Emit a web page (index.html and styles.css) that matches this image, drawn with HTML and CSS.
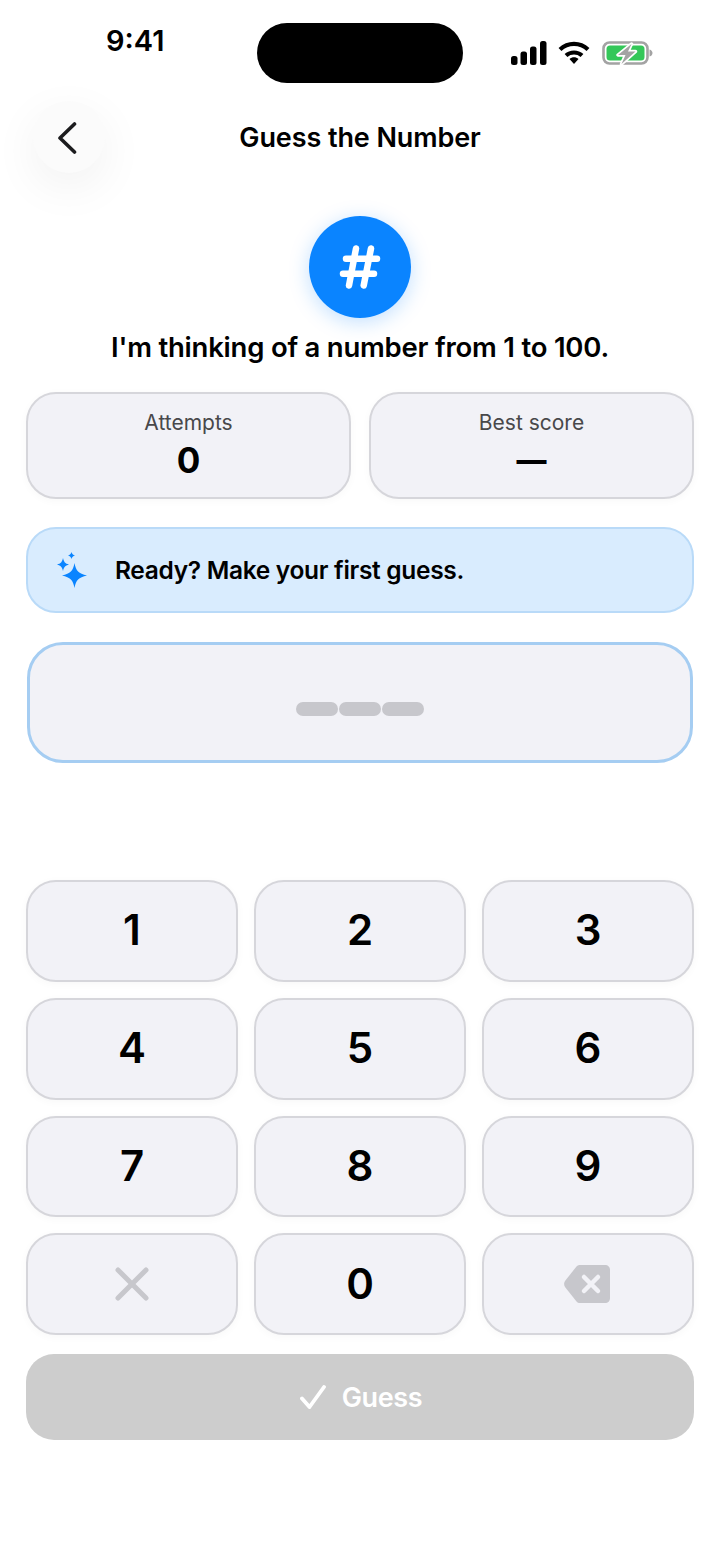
FILE: index.html
```html
<!DOCTYPE html>
<html lang="en">
<head>
<meta charset="utf-8">
<title>Guess the Number</title>
<link rel="stylesheet" href="styles.css">
</head>
<body>
<div class="screen">
  <div class="status">
    <span class="time">9:41</span>
    <div class="island"></div>
    <div class="indicators">
      <svg class="sig" width="37" height="24" viewBox="0 0 37 24"><rect x="1" y="15" width="6.500" height="9" rx="2.500"/><rect x="10.500" y="10.500" width="6.500" height="13.500" rx="2.500"/><rect x="20" y="5.500" width="6.500" height="18.500" rx="2.500"/><rect x="30" y="0" width="6.500" height="24" rx="2.500"/></svg>
      <svg class="wifi" width="32" height="24" viewBox="0 0 32 24"><path d="M2 8.500C10 1 22 1 30 8.500" fill="none" stroke="#000" stroke-width="4.200" stroke-linecap="butt"/><path d="M8 14.500C12.500 10.500 19.500 10.500 24 14.500" fill="none" stroke="#000" stroke-width="4.200"/><path d="M11.500 18 C14 15.800 18 15.800 20.500 18 L16 23Z" fill="#000"/></svg>
      <svg class="batt" width="51" height="24" viewBox="0 0 51 24"><rect x="1.500" y="1.500" width="44" height="21" rx="6" fill="none" stroke="#a3a3a3" stroke-width="2.600"/><rect x="4.500" y="4.500" width="38" height="15" rx="3.500" fill="#34c759"/><path d="M47.500 8.500c2 .5 3 2 3 3.500s-1 3-3 3.500z" fill="#a3a3a3"/><path d="M29.500 3 L16 14 H23.500 L19.500 23 L33.500 10.500 H26 Z" fill="#a3a3a3" stroke="#fff" stroke-width="3.400" stroke-linejoin="round" paint-order="stroke"/></svg>
    </div>
  </div>

  <header class="nav">
    <button class="back" aria-label="Back">
      <svg width="24" height="34" viewBox="0 0 24 34"><path d="M17.500 4 L3 18 L17.500 32" fill="none" stroke="#1c1c1e" stroke-width="3.600" stroke-linecap="round" stroke-linejoin="round"/></svg>
    </button>
    <h1 class="title">Guess the Number</h1>
  </header>

  <div class="hash">
    <svg width="44" height="46" viewBox="0 0 44 46"><g fill="none" stroke="#fff" stroke-width="6.500" stroke-linecap="round"><path d="M18 4.500L11 41.500"/><path d="M33 4.500L25.700 41.500"/><path d="M8 14.700H39"/><path d="M5 29.700H36"/></g></svg>
  </div>
  <p class="lead">I'm thinking of a number from 1 to 100.</p>

  <div class="stats">
    <div class="stat"><span class="stat-label">Attempts</span><span class="stat-value">0</span></div>
    <div class="stat"><span class="stat-label">Best score</span><span class="stat-value stat-empty">—</span></div>
  </div>

  <div class="banner">
    <svg class="spark" width="34" height="38" viewBox="0 0 34 38"><path fill="#0a84ff" d="M19.500 12C21 20 23.500 22.500 32 24.500C23.500 26.500 21 29 19.500 37C18 29 15.500 26.500 7 24.500C15.500 22.500 18 20 19.500 12Z"/><path fill="#0a84ff" d="M8 7C9 11 10 12.500 14 13.500C10 14.500 9 16 8 20C7 16 6 14.500 2 13.500C6 12.500 7 11 8 7Z"/><path fill="#0a84ff" d="M16.500 1C17 3 18 4 20 4.500C18 5 17 6 16.500 8C16 6 15 5 13 4.500C15 4 16 3 16.500 1Z"/></svg>
    <span class="banner-text">Ready? Make your first guess.</span>
  </div>

  <div class="entry">
    <span class="dash"></span><span class="dash"></span><span class="dash"></span>
  </div>

  <div class="pad">
    <button class="key">1</button>
    <button class="key">2</button>
    <button class="key">3</button>
    <button class="key">4</button>
    <button class="key">5</button>
    <button class="key">6</button>
    <button class="key">7</button>
    <button class="key">8</button>
    <button class="key">9</button>
    <button class="key key-icon" aria-label="Clear">
      <svg width="36" height="36" viewBox="0 0 36 36"><path d="M4 4L32 32M32 4L4 32" fill="none" stroke="#c7c7cc" stroke-width="5" stroke-linecap="round"/></svg>
    </button>
    <button class="key">0</button>
    <button class="key key-icon key-back" aria-label="Delete">
      <svg width="48" height="40" viewBox="0 0 48 40"><path d="M17 1H42C45 1 47 3 47 6V34C47 37 45 39 42 39H17C15.500 39 14.500 38.500 13.500 37.500L2 23C0.800 21 0.800 19 2 17L13.500 2.500C14.500 1.500 15.500 1 17 1Z" fill="#c7c7cc"/><path d="M21 13L35 27M35 13L21 27" fill="none" stroke="#f2f2f7" stroke-width="4.500" stroke-linecap="round"/></svg>
    </button>
  </div>

  <button class="guess">
    <svg width="26" height="24" viewBox="0 0 26 24"><path d="M2 13.500L9.500 22L24 2" fill="none" stroke="#fff" stroke-width="3.800" stroke-linecap="round" stroke-linejoin="round"/></svg>
    <span>Guess</span>
  </button>
</div>
</body>
</html>
```
FILE: styles.css
```css
* { box-sizing: border-box; }
html, body { margin: 0; padding: 0; background: #fff; }
body { font-family: Inter, "Liberation Sans", sans-serif; color: #000; }
button { font-family: inherit; padding: 0; }

.screen { width: 720px; height: 1564px; padding: 0 26px; display: flex; flex-direction: column; overflow: hidden; }

.status { height: 101px; padding-top: 23px; margin: 0 -26px; display: flex; align-items: flex-start; position: relative; }
.time { width: 257px; padding-left: 106px; margin-top: 1px; font-size: 29px; line-height: 34px; font-weight: 600; }
.island { width: 206px; height: 60px; border-radius: 30px; background: #000; }
.indicators { display: flex; align-items: center; margin: 18px 0 0 47px; gap: 11px; }
.batt { margin-left: 1px; }

.nav { height: 72px; display: flex; align-items: center; justify-content: center; position: relative; }
.back { position: absolute; left: 7px; top: 0; width: 72px; height: 72px; border-radius: 50%; border: 0; background: #fbfbfb; box-shadow: 0 14px 48px rgba(0,0,0,.06); display: flex; align-items: center; justify-content: center; }
.title { margin: 2px 0 0; font-size: 27px; line-height: 32px; font-weight: 600; letter-spacing: -.1px; }

.hash { width: 102px; height: 102px; margin: 43px auto 0; border-radius: 50%; background: #0a84ff; box-shadow: 0 4px 20px rgba(10,132,255,.25); display: flex; align-items: center; justify-content: center; }
.lead { margin: 11px 0 0; text-align: center; font-size: 27.500px; line-height: 36px; font-weight: 600; letter-spacing: -.22px; }

.stats { margin-top: 27px; display: grid; grid-template-columns: 1fr 1fr; gap: 18px; }
.stat { height: 107px; border: 2px solid #d6d6db; border-radius: 30px; background: #f2f2f7; display: flex; flex-direction: column; align-items: center; padding-top: 16px; box-shadow: 0 2px 8px rgba(0,0,0,.03); }
.stat-label { font-size: 21px; line-height: 26px; font-weight: 400; color: #48484a; }
.stat-value { font-size: 35px; line-height: 42px; font-weight: 700; margin-top: 3px; }
.stat-empty { font-size: 30px; font-weight: 800; }

.banner { height: 86px; margin-top: 28px; border: 2px solid #b9daf8; border-radius: 30px; background: #d9ecfe; display: flex; align-items: center; padding-left: 27px; gap: 26px; }
.spark { flex: none; }
.banner-text { font-size: 24.500px; line-height: 30px; font-weight: 600; letter-spacing: -.31px; }

.entry { height: 121px; margin: 29px 1px 0; border: 3.500px solid #a5cdf2; border-radius: 36px; background: #f2f2f7; display: flex; align-items: center; justify-content: center; gap: 1px; padding-top: 12px; }
.dash { width: 42px; height: 14px; border-radius: 7px; background: #c7c7cc; }

.pad { margin-top: 117px; display: grid; grid-template-columns: repeat(3, 1fr); grid-auto-rows: 101.750px; gap: 16px; }
.key { border: 2px solid #d6d6db; border-radius: 30px; background: #f2f2f7; font-size: 42px; font-weight: 600; color: #000; display: flex; align-items: center; justify-content: center; padding-bottom: 2px; box-shadow: 0 2px 8px rgba(0,0,0,.03); }
.key-icon { padding-bottom: 0; }
.key-back { padding-right: 2px; }

.guess { height: 86px; margin-top: 19px; padding-left: 2px; border: 0; border-radius: 28px; background: #cdcdcd; color: #fff; display: flex; align-items: center; justify-content: center; gap: 16px; font-size: 27px; font-weight: 600; letter-spacing: -.4px; }
```
